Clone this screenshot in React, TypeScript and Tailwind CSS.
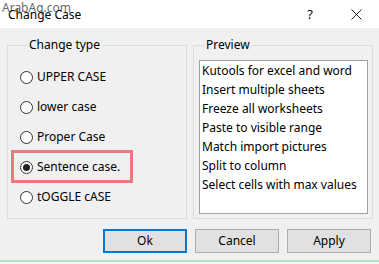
import { useState } from 'react'

const caseOptions = [
  'UPPER CASE',
  'lower case',
  'Proper Case',
  'Sentence case.',
  'tOGGLE cASE',
]

const previewLines = [
  'Kutools for excel and word',
  'Insert multiple sheets',
  'Freeze all worksheets',
  'Paste to visible range',
  'Match import pictures',
  'Split to column',
  'Select cells with max values',
]

function Radio({ checked }: { checked: boolean }) {
  return (
    <span className="flex h-[13px] w-[13px] shrink-0 items-center justify-center rounded-full border border-[#333] bg-white">
      {checked && <span className="h-[7px] w-[7px] rounded-full bg-[#222]" />}
    </span>
  )
}

function WinButton({
  label,
  primary,
}: {
  label: string
  primary?: boolean
}) {
  return (
    <button
      type="button"
      className={
        primary
          ? 'h-[24px] w-[84px] border-2 border-[#0078d7] bg-[#e1e1e1] text-[12px] text-black'
          : 'h-[24px] w-[84px] border border-[#adadad] bg-[#e1e1e1] text-[12px] text-black'
      }
    >
      {label}
    </button>
  )
}

export default function App() {
  const [selected, setSelected] = useState(3)

  return (
    <div
      className="relative h-[264px] w-[379px] overflow-hidden bg-[#f0f0f0] text-black"
      style={{ fontFamily: '"Noto Sans", "Open Sans", sans-serif' }}
    >
      {/* title bar */}
      <div className="flex h-[28px] items-center bg-white pl-[8px]">
        <span className="pt-[2px] text-[12px] leading-none">Change Case</span>
        <span className="ml-auto mr-[38px] text-[13px] leading-none">?</span>
        <svg
          width="11"
          height="11"
          viewBox="0 0 11 11"
          className="mr-[17px]"
          stroke="#222"
          strokeWidth="1"
        >
          <path d="M0.5 0.5 L10.5 10.5 M10.5 0.5 L0.5 10.5" />
        </svg>
      </div>
      <span className="absolute left-[2px] top-[1px] text-[12px] leading-[14px] text-[#444] opacity-80">
        ArabAq.com
      </span>

      {/* groups */}
      <div className="mt-[9px] flex gap-[6px] pl-[7px]">
        <fieldset className="h-[182px] w-[180px] border border-[#dcdcdc] pl-[12px] pt-[9px]">
          <legend className="ml-[7px] px-[2px] text-[12px] leading-[16px]">
            Change type
          </legend>
          <div className="flex flex-col">
            {caseOptions.map((opt, i) => (
              <label
                key={opt}
                className="relative flex h-[30px] cursor-default items-center gap-[4px] text-[12px]"
                onClick={() => setSelected(i)}
              >
                {i === 3 && (
                  <span className="absolute -left-[9px] top-[-2px] h-[33px] w-[122px] border-[3px] border-[#e97b7d]" />
                )}
                <Radio checked={selected === i} />
                <span>{opt}</span>
              </label>
            ))}
          </div>
        </fieldset>

        <fieldset className="h-[182px] w-[180px] border border-[#dcdcdc] pl-[5px] pr-[4px]">
          <legend className="ml-[5px] px-[2px] text-[12px] leading-[16px]">
            Preview
          </legend>
          <div className="mt-[7px] h-[154px] border border-[#a0a0a0] bg-white pl-[2px]">
            {previewLines.map((line) => (
              <div key={line} className="h-[19px] text-[12px] leading-[19px]">
                {line}
              </div>
            ))}
          </div>
        </fieldset>
      </div>

      {/* buttons */}
      <div className="mt-[10px] flex justify-end gap-[8px] pr-[8px]">
        <WinButton label="Ok" primary />
        <WinButton label="Cancel" />
        <WinButton label="Apply" />
      </div>

      <div className="absolute bottom-0 left-0 h-[4px] w-full border-t-2 border-[#b5e0c8] bg-[#f6f6f6]" />
    </div>
  )
}
